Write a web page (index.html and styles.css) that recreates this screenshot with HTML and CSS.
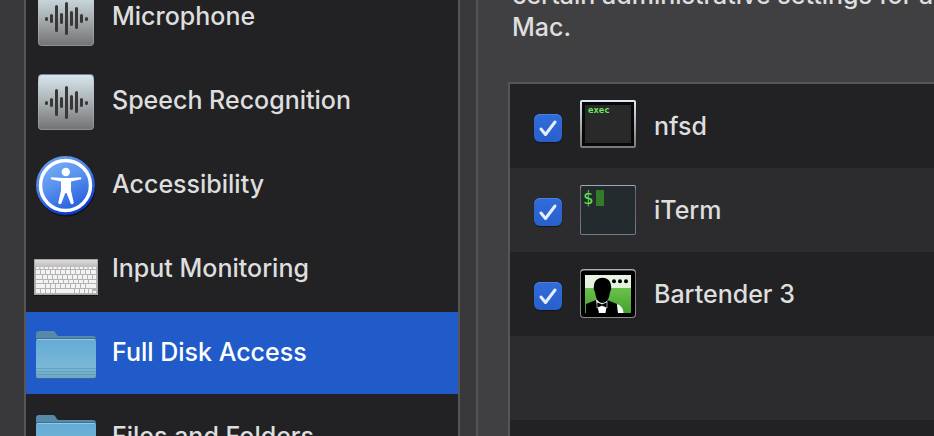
FILE: index.html
```html
<!DOCTYPE html>
<html lang="en">
<head>
<meta charset="utf-8">
<title>Privacy</title>
<link rel="stylesheet" href="styles.css">
</head>
<body>
<svg class="defs" aria-hidden="true">
  <defs>
    <linearGradient id="plate" x2="0" y2="1"><stop stop-color="#d7e6ed"/><stop offset=".5" stop-color="#a9b0b3"/><stop offset="1" stop-color="#747474"/></linearGradient>
    <linearGradient id="plateEdge" x2="0" y2="1"><stop stop-color="#6d8199"/><stop offset=".15" stop-color="#c5d0d5"/><stop offset="1" stop-color="#8f8f8f"/></linearGradient>
    <linearGradient id="ring" x2=".4" y2="1"><stop stop-color="#6aa6ee"/><stop offset=".5" stop-color="#4681e4"/><stop offset="1" stop-color="#0b3dd0"/></linearGradient>
    <linearGradient id="disc" x2=".5" y2="1"><stop stop-color="#7db2f5"/><stop offset=".5" stop-color="#5a94ef"/><stop offset="1" stop-color="#2c63df"/></linearGradient>
    <linearGradient id="keyboardTop" x2="0" y2="1"><stop stop-color="#dcdadb"/><stop offset="1" stop-color="#bdbbbc"/></linearGradient>
    <linearGradient id="folderFront" x2="0" y2="1"><stop stop-color="#64abd6"/><stop offset=".75" stop-color="#7bb8d6"/><stop offset="1" stop-color="#6ba6c3"/></linearGradient>
    <linearGradient id="frame" x2="0" y2="1"><stop stop-color="#dcebf5"/><stop offset="1" stop-color="#777"/></linearGradient>
    <linearGradient id="slate" x2="0" y2="1"><stop stop-color="#a9b0bb"/><stop offset=".12" stop-color="#59616a"/><stop offset="1" stop-color="#777c80"/></linearGradient>
    <linearGradient id="bezel" x2="0" y2="1"><stop stop-color="#b5b5b5"/><stop offset=".1" stop-color="#757575"/><stop offset="1" stop-color="#8d8d8d"/></linearGradient>
    <linearGradient id="lawn" x2="0" y2="1"><stop stop-color="#6cc04c"/><stop offset="1" stop-color="#43a52c"/></linearGradient>
    <linearGradient id="sky" x2="0" y2="1"><stop stop-color="#e8f5e3"/><stop offset="1" stop-color="#d3ebc9"/></linearGradient>
    <symbol id="wave" viewBox="0 0 64 64">
      <rect x="4" y="4" width="56" height="56" rx="4" fill="url(#plateEdge)"/>
      <rect x="5" y="5" width="54" height="54" rx="3" fill="url(#plate)"/>
      <g stroke="#383838" stroke-width="3" stroke-linecap="round">
        <path d="M12.500 32.500v1M17.500 29.500v6M22.500 20.500v24M27.500 28.500v8M32.500 17.500v30M37.500 26.500v12M42.500 22.500v19M47.500 29.500v6M52.500 32.500v1"/>
      </g>
    </symbol>
    <symbol id="folder" viewBox="0 0 64 64">
      <path d="M2 56V12q0-3 3-3h14c3 0 3 5 6 5h34q3 0 3 3v39z" fill="#568aa8"/>
      <path d="M2 16h60v2H2z" fill="#416e88"/>
      <rect x="2" y="17" width="60" height="40" rx="2" fill="#376887"/>
      <rect x="2" y="17" width="60" height="39" rx="2" fill="url(#folderFront)"/>
      <path d="M3 17.500h58" stroke="#92c9e8"/>
      <path d="M2 46.500h60M2 49.500h60M2 52.500h60" stroke="#5c98b8" opacity=".7"/>
    </symbol>
    <symbol id="keyboard" viewBox="0 0 64 64">
      <rect y="22" width="64" height="36" fill="#111"/>
      <rect y="21" width="64" height="36" fill="#a8a6a7"/>
      <rect x="1" y="22" width="62" height="7" fill="url(#keyboardTop)"/>
      <rect x="1" y="29" width="62" height="27" fill="#b4b2b3"/>
      <g fill="none" stroke="#f3f3f3">
        <path d="M2 30h60" stroke-width="2" stroke-dasharray="3.300 1.080"/>
        <path d="M2 34h4m1 0h4m1 0h4m1 0h4m1 0h4m1 0h4m1 0h4m1 0h4m1 0h4m1 0h4m1 0h4m1 0h5" stroke-width="4"/>
        <path d="M2 39h6m1 0h4m1 0h4m1 0h4m1 0h4m1 0h4m1 0h4m1 0h4m1 0h4m1 0h4m1 0h4m1 0h3" stroke-width="4"/>
        <path d="M2 43.500h7m1 0h4m1 0h4m1 0h4m1 0h4m1 0h4m1 0h4m1 0h4m1 0h4m1 0h4m1 0h7" stroke-width="3"/>
        <path d="M2 48h9m1 0h4m1 0h4m1 0h4m1 0h4m1 0h4m1 0h4m1 0h4m1 0h4m1 0h10" stroke-width="4"/>
        <path d="M2 53h4m1 0h4m1 0h4m1 0h4m1 0h18m1 0h4m1 0h4m1 0h3" stroke-width="4"/>
        <path d="M51 54h3m1 0h3m1 0h3M55 52h3" stroke-width="2"/>
      </g>
    </symbol>
    <symbol id="person" viewBox="0 0 64 64">
      <circle cx="32" cy="33" r="29.500" fill="#111"/>
      <circle cx="31.500" cy="31.500" r="29.500" fill="url(#ring)"/>
      <circle cx="31.500" cy="31.500" r="25" fill="url(#disc)" stroke="#fff" stroke-width="3.500"/>
      <circle cx="31.800" cy="18" r="4.200" fill="#fff"/>
      <path d="M17.500 23.200 28 24h8l10.500-.8q1.500.5.5 2L37 27.500v9l2.800 12.500q-1 1.800-3 .8L32.500 39h-1.200L27.200 49.800q-2 1-3-.8L27 36.500v-9l-10-2.300q-.8-1.500.5-2z" fill="#fff"/>
    </symbol>
    <symbol id="tick" viewBox="0 0 28 28">
      <path d="M7 15 11.500 20.500 21 8" fill="none" stroke="#e6edfb" stroke-width="3" stroke-linecap="round" stroke-linejoin="round"/>
    </symbol>
  </defs>
</svg>
<main class="pane">
  <nav class="sidebar">
    <ul class="categories">
      <li><button class="category" type="button"><svg class="category-icon"><use href="#wave"/></svg><span>Microphone</span></button></li>
      <li><button class="category" type="button"><svg class="category-icon"><use href="#wave"/></svg><span>Speech Recognition</span></button></li>
      <li><button class="category" type="button"><svg class="category-icon"><use href="#person"/></svg><span>Accessibility</span></button></li>
      <li><button class="category" type="button"><svg class="category-icon"><use href="#keyboard"/></svg><span>Input Monitoring</span></button></li>
      <li><button class="category selected" type="button" aria-current="true"><svg class="category-icon"><use href="#folder"/></svg><span>Full Disk Access</span></button></li>
      <li><button class="category" type="button"><svg class="category-icon"><use href="#folder"/></svg><span>Files and Folders</span></button></li>
    </ul>
  </nav>
  <section class="detail">
    <p class="note">certain administrative settings for all<br>Mac.</p>
    <ul class="apps">
      <li class="app">
        <span class="check"><input type="checkbox" id="nfsd" checked><svg><use href="#tick"/></svg></span>
        <label for="nfsd">
          <svg class="app-icon" viewBox="0 0 56 52">
            <rect width="56" height="48" rx="2" fill="url(#frame)"/>
            <rect x="2" y="2" width="52" height="44" fill="#080808"/>
            <rect x="5" y="5" width="46" height="38" fill="#292929"/>
            <text class="exec" x="8" y="13">exec</text>
          </svg>
          <span>nfsd</span>
        </label>
      </li>
      <li class="app">
        <span class="check"><input type="checkbox" id="iterm" checked><svg><use href="#tick"/></svg></span>
        <label for="iterm">
          <svg class="app-icon" viewBox="0 -1 56 52">
            <rect width="56" height="50" rx="2" fill="url(#slate)"/>
            <rect x="1" y="1" width="54" height="48" rx="1" fill="#232b2f"/>
            <text class="prompt" x="3" y="19">$</text>
            <rect x="16" y="5" width="8" height="16" fill="#347a2a"/>
          </svg>
          <span>iTerm</span>
        </label>
      </li>
      <li class="app">
        <span class="check"><input type="checkbox" id="bartender" checked><svg><use href="#tick"/></svg></span>
        <label for="bartender">
          <svg class="app-icon" viewBox="0 0 56 52">
            <rect y="1" width="56" height="49" rx="4" fill="url(#bezel)"/>
            <rect x="1" y="2.500" width="54" height="46.500" rx="3" fill="#000"/>
            <rect x="5" y="7" width="46" height="38" fill="url(#sky)"/>
            <rect x="5" y="20" width="46" height="25" fill="url(#lawn)"/>
            <path d="M6 45v-9l10-4h11l10 4 1 9z"/>
            <path d="M37 36q6 2 6.500 9H38zM16 32h11.500l-2 13H19z" fill="#fff"/>
            <path d="M14 18c0-11 17-11 17 0 .5 1 0 5-1 6-1 7-3 11-7.500 11S16 31 15 24c-1-1-1.500-5-1-6z"/>
            <path d="m17 34 5 2 5-2v6l-5-2-5 2z" stroke="#fff" stroke-width=".6"/>
            <circle cx="34" cy="13.300" r="2"/><circle cx="40" cy="13.300" r="2"/><circle cx="46" cy="13.300" r="2"/>
          </svg>
          <span>Bartender 3</span>
        </label>
      </li>
      <li class="app"></li>
      <li class="app"></li>
    </ul>
  </section>
</main>
</body>
</html>
```
FILE: styles.css
```css
* {
  box-sizing: border-box;
}

body {
  margin: 0;
  height: 100vh;
  overflow: hidden;
  background: #39393b;
  color: #dededf;
  font: 500 25px/32px Inter, "Liberation Sans", sans-serif;
}

ul,
p {
  margin: 0;
  padding: 0;
  list-style: none;
}

.defs {
  position: absolute;
  width: 0;
  height: 0;
}

.pane {
  display: flex;
  height: 100%;
  padding-left: 24px;
  gap: 16px;
}

.sidebar {
  flex: 0 0 436px;
  overflow: hidden;
  background: #222224;
  border: solid #565658;
  border-width: 0 2px;
}

/* The list is scrolled part of the way through its first row. */
.categories {
  margin-top: -24px;
}

.categories li {
  padding-bottom: 2px;
}

.category {
  display: flex;
  align-items: center;
  gap: 14px;
  width: 100%;
  height: 82px;
  padding: 2px 8px 0;
  border: 0;
  background: none;
  color: inherit;
  font: inherit;
  text-align: left;
}

.category span {
  padding-bottom: 4px;
}

.category-icon {
  flex: none;
  width: 64px;
  height: 64px;
}

.category.selected {
  background: #205bc9;
  color: #fff;
}

.detail {
  flex: 1;
  min-width: 0;
  overflow: hidden;
  padding-left: 30px;
  background: #404042;
  border-left: 2px solid #545456;
}

.note {
  margin: -21px 0 39px;
  padding-left: 4px;
  white-space: nowrap;
}

.apps {
  border: solid #565658;
  border-width: 2px 0 0 2px;
}

.app {
  display: flex;
  align-items: center;
  gap: 18px;
  height: 84px;
  padding-left: 24px;
  background: #222224;
}

.app:nth-child(even) {
  background: #2c2c2e;
}

.app label {
  display: flex;
  align-items: center;
  gap: 18px;
}

.app-icon {
  width: 56px;
  height: 52px;
}

.check {
  display: grid;
  padding-top: 4px;
}

.check input,
.check svg {
  grid-area: 1 / 1;
  width: 28px;
  height: 28px;
  margin: 0;
}

.check svg {
  pointer-events: none;
}

.check input {
  appearance: none;
  border-radius: 6px;
  background: linear-gradient(#316cdc, #2860ca);
  box-shadow: inset 0 1px #4b80df, 0 1px 1px #151517;
}

.exec {
  fill: #6fe85f;
  font: bold 9px "DejaVu Sans Mono", monospace;
}

.prompt {
  fill: #62e24b;
  font: 17px "DejaVu Sans Mono", monospace;
}
```
